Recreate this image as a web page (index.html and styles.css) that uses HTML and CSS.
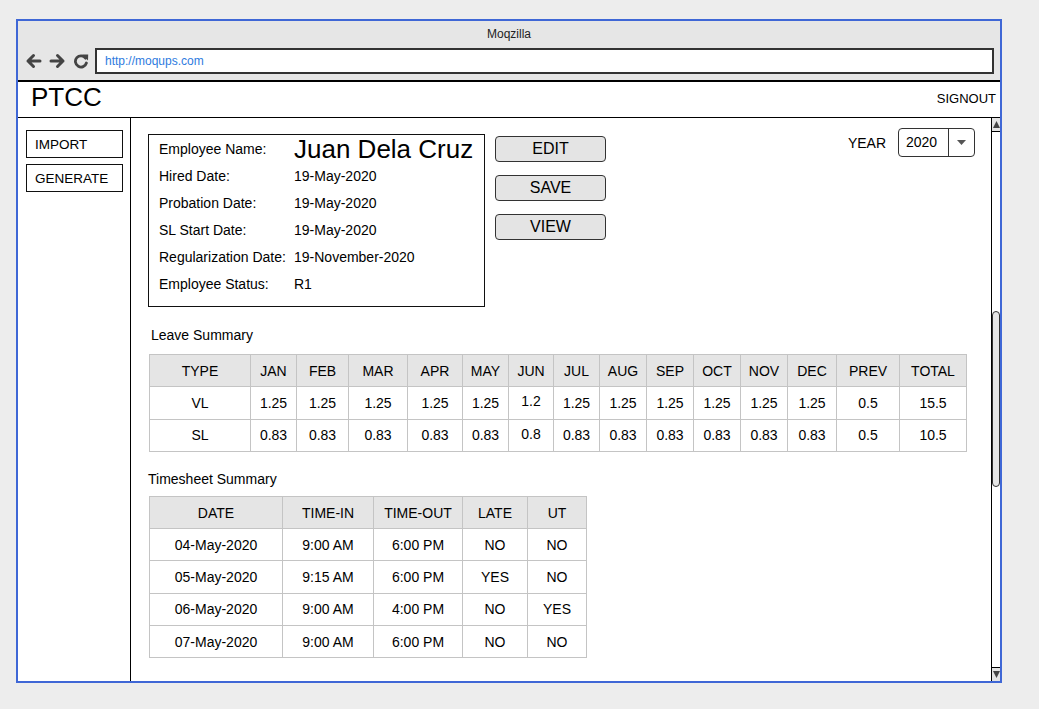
FILE: index.html
```html
<!DOCTYPE html>
<html lang="en">
<head>
<meta charset="utf-8">
<title>Moqzilla - PTCC</title>
<link rel="stylesheet" href="styles.css">
</head>
<body>
<div class="window">
  <div class="chrome">
    <div class="chrome-title">Moqzilla</div>
    <div class="navrow">
      <div class="navicons">
        <svg class="nav-ico" width="17" height="16" viewBox="0 0 17 16"><path d="M15 8H3M8.5 2.5L3 8l5.5 5.5" fill="none" stroke="#444" stroke-width="3" stroke-linecap="round" stroke-linejoin="round"/></svg>
        <svg class="nav-ico" width="17" height="16" viewBox="0 0 17 16"><path d="M2 8h12M8.5 2.5L14 8l-5.5 5.5" fill="none" stroke="#444" stroke-width="3" stroke-linecap="round" stroke-linejoin="round"/></svg>
        <svg class="nav-ico" width="16" height="16" viewBox="0 0 16 16"><path d="M12.6 5.2A5.6 5.6 0 1 0 13.4 10" fill="none" stroke="#444" stroke-width="2.8" stroke-linecap="round"/><path d="M9.2 1.6L15.2 1.4L15 7.4Z" fill="#444"/></svg>
      </div>
      <div class="address">http://moqups.com</div>
    </div>
  </div>
  <div class="appbar">
    <span class="brand">PTCC</span>
    <span class="signout">SIGNOUT</span>
  </div>
  <div class="body">
    <aside class="sidebar">
      <div class="side-btn">IMPORT</div>
      <div class="side-btn">GENERATE</div>
    </aside>
    <main class="main">
      <div class="toprow">
        <div class="card">
          <div class="lbl">Employee Name:</div><div class="val name">Juan Dela Cruz</div>
          <div class="lbl">Hired Date:</div><div class="val">19-May-2020</div>
          <div class="lbl">Probation Date:</div><div class="val">19-May-2020</div>
          <div class="lbl">SL Start Date:</div><div class="val">19-May-2020</div>
          <div class="lbl">Regularization Date:</div><div class="val">19-November-2020</div>
          <div class="lbl">Employee Status:</div><div class="val">R1</div>
        </div>
        <div class="actions">
          <div class="btn">EDIT</div>
          <div class="btn">SAVE</div>
          <div class="btn">VIEW</div>
        </div>
        <div class="year">
          <span class="year-lbl">YEAR</span>
          <div class="select">
            <span class="select-val">2020</span>
            <span class="select-arrow"><svg width="9" height="5" viewBox="0 0 9 5"><path d="M0 0h9L4.5 5z" fill="#555"/></svg></span>
          </div>
        </div>
      </div>

      <div class="section-title leave-title">Leave Summary</div>
      <table class="grid leave">
        <colgroup>
          <col style="width:101px"><col style="width:46px"><col style="width:52px"><col style="width:59px"><col style="width:55px"><col style="width:46px"><col style="width:45px"><col style="width:46px"><col style="width:47px"><col style="width:47px"><col style="width:47px"><col style="width:47px"><col style="width:49px"><col style="width:63px"><col style="width:67px">
        </colgroup>
        <thead>
          <tr><th>TYPE</th><th>JAN</th><th>FEB</th><th>MAR</th><th>APR</th><th>MAY</th><th>JUN</th><th>JUL</th><th>AUG</th><th>SEP</th><th>OCT</th><th>NOV</th><th>DEC</th><th>PREV</th><th>TOTAL</th></tr>
        </thead>
        <tbody>
          <tr><td>VL</td><td>1.25</td><td>1.25</td><td>1.25</td><td>1.25</td><td>1.25</td><td class="hi">1.2</td><td>1.25</td><td>1.25</td><td>1.25</td><td>1.25</td><td>1.25</td><td>1.25</td><td>0.5</td><td>15.5</td></tr>
          <tr><td>SL</td><td>0.83</td><td>0.83</td><td>0.83</td><td>0.83</td><td>0.83</td><td class="hi">0.8</td><td>0.83</td><td>0.83</td><td>0.83</td><td>0.83</td><td>0.83</td><td>0.83</td><td>0.5</td><td>10.5</td></tr>
        </tbody>
      </table>

      <div class="section-title ts-title">Timesheet Summary</div>
      <table class="grid ts">
        <colgroup>
          <col style="width:133px"><col style="width:91px"><col style="width:89px"><col style="width:65px"><col style="width:59px">
        </colgroup>
        <thead>
          <tr><th>DATE</th><th>TIME-IN</th><th>TIME-OUT</th><th>LATE</th><th>UT</th></tr>
        </thead>
        <tbody>
          <tr><td>04-May-2020</td><td>9:00 AM</td><td>6:00 PM</td><td>NO</td><td>NO</td></tr>
          <tr><td>05-May-2020</td><td>9:15 AM</td><td>6:00 PM</td><td>YES</td><td>NO</td></tr>
          <tr><td>06-May-2020</td><td>9:00 AM</td><td>4:00 PM</td><td>NO</td><td>YES</td></tr>
          <tr><td>07-May-2020</td><td>9:00 AM</td><td>6:00 PM</td><td>NO</td><td>NO</td></tr>
        </tbody>
      </table>
    </main>
    <div class="scrollbar">
      <div class="sb-btn sb-up"><svg width="7" height="7" viewBox="0 0 7 7"><path d="M3.5 0L7 7H0z" fill="#444"/></svg></div>
      <div class="sb-track"><div class="sb-thumb"></div></div>
      <div class="sb-btn sb-down"><svg width="7" height="7" viewBox="0 0 7 7"><path d="M0 0h7L3.5 7z" fill="#444"/></svg></div>
    </div>
  </div>
</div>
</body>
</html>
```

FILE: styles.css
```css
* { box-sizing: border-box; }
html, body { margin: 0; padding: 0; }
body {
  background: #ededed;
  font-family: "Liberation Sans", Arial, sans-serif;
  color: #000;
  width: 1039px;
  height: 709px;
  overflow: hidden;
}
.window {
  margin: 19px 0 0 16px;
  width: 986px;
  height: 664px;
  border: 2px solid #3f67d6;
  background: #fff;
  display: flex;
  flex-direction: column;
}
.chrome {
  height: 61px;
  flex: none;
  background: #e6e6e6;
  border-bottom: 2px solid #000;
}
.chrome-title {
  padding-top: 6px;
  height: 20px;
  line-height: 14px;
  font-size: 12px;
  text-align: center;
  color: #222;
}
.navrow {
  margin-top: 7px;
  display: flex;
  align-items: center;
  padding: 0 6px 0 7px;
}
.navicons {
  display: flex;
  align-items: center;
  gap: 7px;
  width: 70px;
  flex: none;
}
.nav-ico { display: block; }
.address {
  flex: 1;
  height: 26px;
  border: 2px solid #333;
  background: #fff;
  font-size: 12px;
  line-height: 22px;
  padding-left: 8px;
  color: #2e7be0;
}
.appbar {
  height: 36px;
  flex: none;
  border-bottom: 1px solid #000;
  display: flex;
  justify-content: space-between;
  align-items: flex-start;
  padding: 1px 4px 0 13px;
}
.brand {
  font-size: 26px;
  line-height: 29px;
}
.signout {
  font-size: 13px;
  line-height: 16px;
  margin-top: 8px;
}
.body {
  flex: 1;
  display: flex;
  min-height: 0;
}
.sidebar {
  width: 113px;
  flex: none;
  border-right: 1px solid #000;
  padding: 12px 0 0 8px;
  display: flex;
  flex-direction: column;
  gap: 6px;
}
.side-btn {
  width: 97px;
  height: 28px;
  border: 1px solid #111;
  font-size: 13.5px;
  line-height: 27px;
  padding-left: 8px;
}
.main {
  flex: 1;
  padding: 10px 16px 0 17px;
  min-width: 0;
}
.toprow {
  display: flex;
  align-items: flex-start;
}
.card {
  margin-top: 6px;
  width: 337px;
  height: 173px;
  border: 1px solid #111;
  padding: 1px 0 8px 10px;
  display: grid;
  grid-template-columns: 135px 1fr;
  grid-auto-rows: 27px;
  font-size: 14px;
  line-height: 27px;
}
.lbl, .val { white-space: nowrap; }
.val.name {
  font-size: 26px;
  line-height: 27px;
}
.actions {
  margin: 8px 0 0 10px;
  display: flex;
  flex-direction: column;
  gap: 13px;
}
.btn {
  width: 111px;
  height: 26px;
  border: 1px solid #333;
  border-radius: 4px;
  background: #e4e4e4;
  font-size: 16px;
  line-height: 24px;
  text-align: center;
}
.year {
  margin-left: auto;
  display: flex;
  align-items: center;
  gap: 12px;
}
.year-lbl {
  font-size: 14px;
  line-height: 16px;
}
.select {
  width: 77px;
  height: 29px;
  border: 1px solid #333;
  border-radius: 4px;
  display: flex;
  background: #fff;
}
.select-val {
  flex: 1;
  font-size: 14px;
  line-height: 27px;
  padding-left: 7px;
  border-right: 1px solid #333;
}
.select-arrow {
  width: 25px;
  flex: none;
  display: flex;
  align-items: center;
  justify-content: center;
}
.select-arrow svg { display: block; }
.section-title {
  font-size: 14px;
  line-height: 16px;
}
.leave-title { margin: 20px 0 11px 3px; }
.ts-title { margin: 19px 0 9px 0; }
.grid {
  border-collapse: collapse;
  table-layout: fixed;
  margin-left: 1px;
  font-size: 14px;
}
.grid.leave { width: 818px; }
.grid.ts { width: 437px; }
.grid th, .grid td {
  border: 1px solid #c4c4c4;
  padding: 0;
  text-align: center;
  font-weight: normal;
  white-space: nowrap;
}
.grid th { background: #e5e5e5; }
.grid tr { height: 32.3px; }
.grid td.hi { padding-bottom: 3px; }
.scrollbar {
  width: 9px;
  flex: none;
  border-left: 1px solid #000;
  display: flex;
  flex-direction: column;
}
.sb-btn {
  height: 14px;
  flex: none;
  background: #e4e4e4;
  display: flex;
  align-items: center;
  justify-content: center;
}
.sb-btn svg { display: block; }
.sb-up { border-bottom: 1px solid #000; }
.sb-down { border-top: 1px solid #000; }
.sb-track {
  flex: 1;
  background: #fff;
}
.sb-thumb {
  margin-top: 179px;
  height: 176px;
  border: 1px solid #333;
  border-radius: 4px;
  background: #e6e6e6;
}
```
